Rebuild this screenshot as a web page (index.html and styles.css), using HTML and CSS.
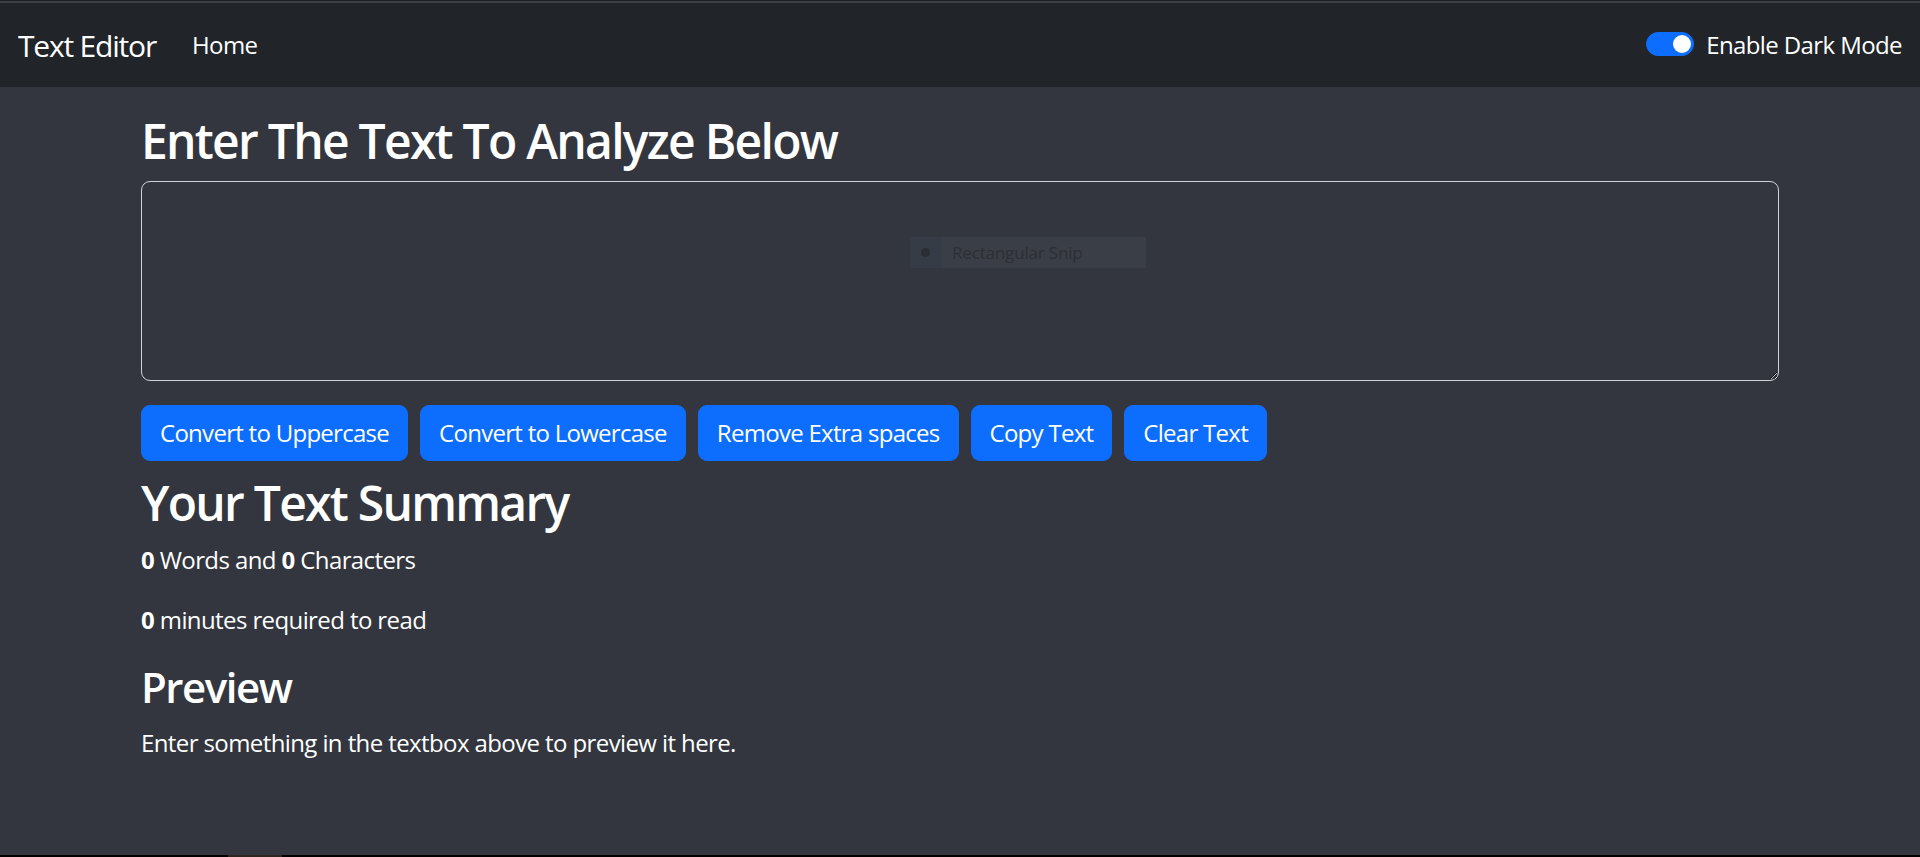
FILE: index.html
```html
<!DOCTYPE html>
<html lang="en">
<head>
<meta charset="utf-8">
<title>Text Editor</title>
<link rel="stylesheet" href="styles.css">
</head>
<body>
<div class="page">
  <div class="topline"></div>
  <nav class="navbar">
    <div class="nav-left">
      <a class="brand" href="#">Text Editor</a>
      <a class="nav-link" href="#">Home</a>
    </div>
    <div class="dark-toggle">
      <span class="switch"><span class="knob"></span></span>
      <span class="switch-label">Enable Dark Mode</span>
    </div>
  </nav>

  <main class="container">
    <h2 class="heading">Enter The Text To Analyze Below</h2>
    <div class="editor">
      <textarea class="textbox" rows="8"></textarea>
      <div class="snip">
        <span class="snip-icon"><span class="snip-dot"></span></span>
        <span class="snip-text">Rectangular Snip</span>
      </div>
    </div>
    <div class="actions">
      <button class="btn">Convert to Uppercase</button>
      <button class="btn">Convert to Lowercase</button>
      <button class="btn">Remove Extra spaces</button>
      <button class="btn">Copy Text</button>
      <button class="btn">Clear Text</button>
    </div>
  </main>

  <section class="container summary">
    <h2 class="heading">Your Text Summary</h2>
    <p class="line"><b>0</b> Words and <b>0</b> Characters</p>
    <p class="line"><b>0</b> minutes required to read</p>
    <h3 class="subheading">Preview</h3>
    <p class="line">Enter something in the textbox above to preview it here.</p>
  </section>

  <div class="bottomline"><span class="taskseg"></span></div>
</div>
</body>
</html>
```

FILE: styles.css
```css
* { box-sizing: border-box; }

html, body {
  margin: 0;
  padding: 0;
}

body {
  background: #33363e;
  color: #ffffff;
  font-family: "Segoe UI", "Open Sans", "Noto Sans", sans-serif;
  font-size: 24px;
  line-height: 1.5;
  letter-spacing: -0.025em;
}

.page {
  min-height: 100vh;
  display: flex;
  flex-direction: column;
}

.topline {
  height: 3px;
  background: #3c3f44;
  border-top: 1px solid #1e2024;
}

.navbar {
  height: 84px;
  background: #212529;
  display: flex;
  align-items: center;
  justify-content: space-between;
  padding: 0 18px;
}

.nav-left {
  display: flex;
  align-items: center;
}

.brand {
  color: #ffffff;
  text-decoration: none;
  font-size: 30px;
  line-height: 45px;
  letter-spacing: -0.04em;
  margin-right: 24px;
}

.nav-link {
  color: #ffffff;
  text-decoration: none;
  font-size: 24px;
  padding: 0 12px;
}

.dark-toggle {
  display: flex;
  align-items: center;
}

.switch {
  width: 48px;
  height: 24px;
  border-radius: 12px;
  background: #0d6efd;
  border: 1px solid #0d6efd;
  display: flex;
  align-items: center;
  justify-content: flex-end;
  padding-right: 2px;
  margin-right: 12px;
  margin-top: -2px;
}

.knob {
  width: 18px;
  height: 18px;
  border-radius: 50%;
  background: #ffffff;
}

.switch-label {
  font-size: 24px;
}

.container {
  width: 1638px;
  margin: 0 auto;
}

.heading {
  font-size: 48px;
  font-weight: 600;
  line-height: 1.2;
  letter-spacing: -0.036em;
  margin: 25px 0 11px;
}

.editor {
  position: relative;
  margin-bottom: 24px;
}

.textbox {
  display: block;
  width: 100%;
  height: 200px;
  background: #33363e;
  color: #ffffff;
  border: 1px solid #ced4da;
  border-radius: 9px;
  padding: 9px 18px;
  font: inherit;
  resize: vertical;
  outline: none;
}

.snip {
  position: absolute;
  left: 769px;
  top: 56px;
  width: 236px;
  height: 31px;
  background: #3a3e46;
  display: flex;
  align-items: center;
}

.snip-icon {
  width: 31px;
  height: 31px;
  background: #363c45;
  display: flex;
  align-items: center;
  justify-content: center;
}

.snip-dot {
  width: 9px;
  height: 9px;
  border-radius: 50%;
  background: #2a2d33;
}

.snip-text {
  margin-left: 11px;
  font-size: 17px;
  letter-spacing: -0.01em;
  color: #2c2f35;
  line-height: 1;
}

.actions {
  display: flex;
  gap: 12px;
}

.btn {
  background: #0d6efd;
  color: #ffffff;
  border: 1px solid #0d6efd;
  border-radius: 9px;
  padding: 9px 18px;
  font: inherit;
  line-height: 36px;
  letter-spacing: -0.03em;
  cursor: pointer;
}

.summary .heading {
  margin-top: 13px;
}

.line {
  margin: 0 0 24px;
}

.subheading {
  font-size: 42px;
  font-weight: 600;
  line-height: 1.2;
  letter-spacing: -0.035em;
  margin: 0 0 12px;
}

.bottomline {
  margin-top: auto;
  height: 2px;
  background: #000000;
  position: relative;
}

.taskseg {
  position: absolute;
  left: 228px;
  top: 0;
  width: 54px;
  height: 2px;
  background: #2b241f;
}
```
